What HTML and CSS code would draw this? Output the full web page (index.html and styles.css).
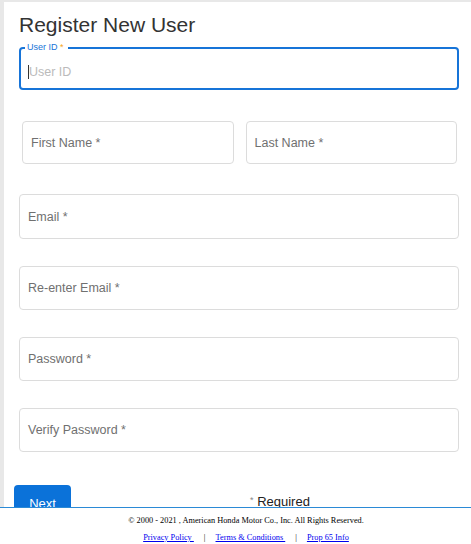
FILE: index.html
```html
<!DOCTYPE html>
<html>
<head>
<meta charset="utf-8">
<link rel="stylesheet" href="styles.css">
</head>
<body>
<div class="page">
  <h1 class="title">Register New User</h1>
  <div class="outlined">
    <span class="legend">User ID <span class="req">*</span></span>
    <span class="caret"></span><span class="ph-light">User ID</span>
  </div>
  <div class="row names">
    <div class="field half">First Name *</div>
    <div class="field half">Last Name *</div>
  </div>
  <div class="field f-email">Email *</div>
  <div class="field f-gap">Re-enter Email *</div>
  <div class="field f-gap">Password *</div>
  <div class="field f-gap">Verify Password *</div>
  <div class="actions">
    <button class="btn">Next</button>
    <span class="required"><span class="star">*</span> Required</span>
  </div>
</div>
<footer class="footer">
  <div class="copy">© 2000 - 2021 , American Honda Motor Co., Inc. All Rights Reserved.</div>
  <div class="links">
    <a href="#">Privacy Policy </a><span class="sep">|</span><a href="#">Terms &amp; Conditions </a><span class="sep">|</span><a href="#">Prop 65 Info</a>
  </div>
</footer>
</body>
</html>
```
FILE: styles.css
```css
html, body {
  margin: 0;
  padding: 0;
}
body {
  background: #e8e8e8;
  font-family: "Liberation Sans", Arial, sans-serif;
  height: 544px;
  overflow: hidden;
}
.page {
  margin: 2px 0 0 4px;
  background: #fff;
  height: 542px;
  padding: 0 12px 0 15px;
  box-sizing: border-box;
}
.title {
  margin: 0;
  padding-top: 11px;
  font-size: 21px;
  font-weight: normal;
  color: #333;
  line-height: 24px;
  height: 34px;
}
.outlined {
  position: relative;
  border: 2px solid #1774d8;
  border-radius: 4px;
  height: 43px;
  box-sizing: border-box;
  display: flex;
  align-items: center;
  padding: 6px 0 0 7px;
  font-size: 12.5px;
}
.legend {
  position: absolute;
  top: -7px;
  left: 4px;
  background: #fff;
  font-size: 9px;
  line-height: 11px;
  color: #1774d8;
  padding: 0 4px 0 2px;
}
.req { color: #f5a623; }
.caret {
  width: 1px;
  height: 14px;
  background: #333;
}
.ph-light { color: #bbb; }
.row {
  display: flex;
  gap: 12px;
}
.names {
  margin: 31px 2px 0 3px;
}
.field {
  border: 1px solid #dcdcdc;
  border-radius: 4px;
  height: 44px;
  box-sizing: border-box;
  display: flex;
  align-items: center;
  padding-left: 8px;
  font-size: 12.5px;
  color: #707070;
}
.half {
  flex: 1;
  height: 43px;
}
.f-email { margin-top: 30px; height: 45px; }
.f-gap { margin-top: 27px; }
.actions {
  margin: 33px 0 0 -5px;
  display: flex;
  align-items: flex-start;
}
.btn {
  width: 57px;
  height: 36px;
  background: #0b72d9;
  border: none;
  border-radius: 4px;
  color: #fff;
  font-family: "Liberation Sans", Arial, sans-serif;
  font-size: 13px;
  padding: 0;
}
.required {
  margin-left: 179px;
  margin-top: 9px;
  font-size: 13px;
  color: #222;
}
.star { font-size: 9px; color: #888; vertical-align: 3px; }
.footer {
  position: fixed;
  left: 0;
  right: 0;
  bottom: 0;
  height: 37px;
  background: #fff;
  border-top: 1px solid #2b8ad6;
  box-sizing: border-box;
  font-family: "Liberation Serif", "Times New Roman", serif;
  font-size: 8.3px;
  color: #000;
  text-align: center;
  padding-left: 21px;
}
.copy {
  margin-top: 8px;
  line-height: 10px;
}
.links {
  margin-top: 7px;
  line-height: 10px;
}
.links a {
  color: #0000ee;
}
.sep {
  margin: 0 10px;
}
```
